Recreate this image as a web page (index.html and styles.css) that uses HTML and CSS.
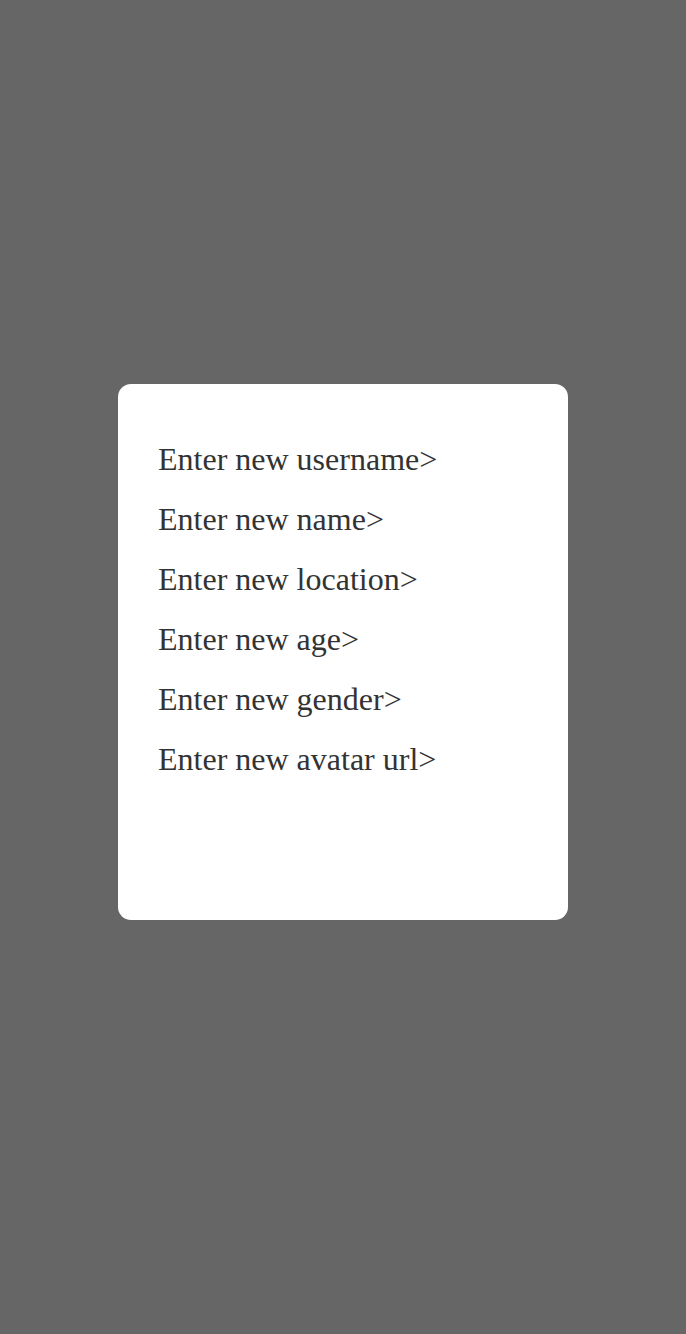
FILE: index.html
```html
<!DOCTYPE html>
<html>
<head>
<meta charset="utf-8">
<link rel="stylesheet" href="styles.css">
</head>
<body>
<div class="overlay">
  <div class="card">
    <div class="prompt">Enter new username&gt;</div>
    <div class="prompt">Enter new name&gt;</div>
    <div class="prompt">Enter new location&gt;</div>
    <div class="prompt">Enter new age&gt;</div>
    <div class="prompt">Enter new gender&gt;</div>
    <div class="prompt">Enter new avatar url&gt;</div>
  </div>
</div>
</body>
</html>
```
FILE: styles.css
```css
html, body {
  margin: 0;
  padding: 0;
  background: #666666;
}
.overlay {
  width: 686px;
  height: 1334px;
  box-sizing: border-box;
  padding-top: 384px;
  display: flex;
  flex-direction: column;
  align-items: center;
}
.card {
  width: 450px;
  height: 536px;
  box-sizing: border-box;
  background: #ffffff;
  border-radius: 13px;
  padding: 45px 40px 0 40px;
}
.prompt {
  font-family: "Liberation Serif", "Times New Roman", serif;
  font-size: 32px;
  line-height: 60px;
  color: #333333;
  white-space: nowrap;
}
```
